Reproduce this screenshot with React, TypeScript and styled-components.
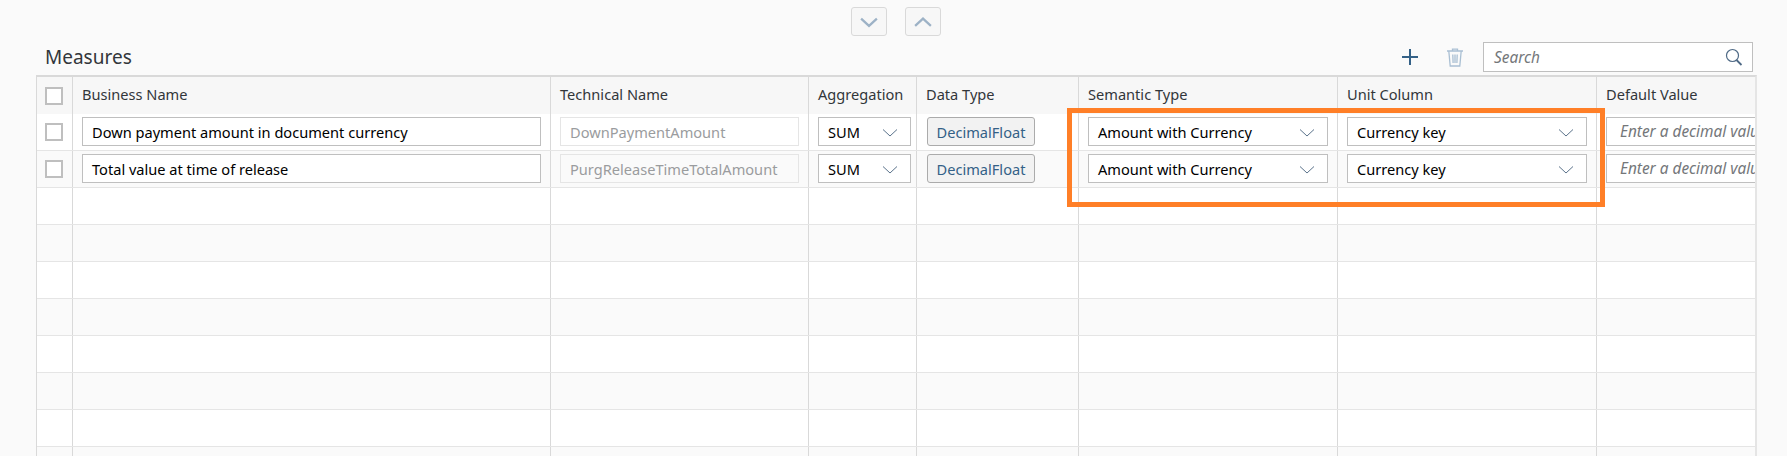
import { FC } from "react";
import styled, { createGlobalStyle } from "styled-components";

const GlobalStyle = createGlobalStyle`
  html, body {
    margin: 0;
    background: #fafafa;
    overflow: hidden;
  }
  * { box-sizing: border-box; }
`;

const FONT = `"Noto Sans", "Liberation Sans", sans-serif`;
const COLUMNS = "36px 478px 258px 108px 162px 259px 259px 160px";

const Page = styled.div`
  width: 1787px;
  height: 456px;
  overflow: hidden;
  padding: 7px 30px 0 36px;
  font-family: ${FONT};
  position: relative;
`;

const MoveBar = styled.div`
  display: flex;
  gap: 18px;
  height: 29px;
  padding-left: 815px;
`;

const MoveButton = styled.button`
  width: 36px;
  height: 29px;
  padding: 0;
  display: flex;
  align-items: center;
  justify-content: center;
  background: #f7f7f7;
  border: 1px solid #d9d9d9;
  border-radius: 3px;
`;

const Toolbar = styled.div`
  display: flex;
  align-items: center;
  height: 39px;
  padding: 3px 4px 0 9px;
`;

const Title = styled.h2`
  flex: 1;
  margin: 0;
  font-size: 19px;
  font-weight: 400;
  color: #32363a;
`;

const IconButton = styled.span<{ $gap: number }>`
  display: flex;
  width: 22px;
  height: 22px;
  align-items: center;
  justify-content: center;
  margin-right: ${({ $gap }) => $gap}px;
`;

const SearchBox = styled.div`
  width: 270px;
  height: 30px;
  display: flex;
  align-items: center;
  justify-content: space-between;
  padding: 0 9px 0 10px;
  background: #fff;
  border: 1px solid #bfbfbf;
  font-size: 15.4px;
  font-style: italic;
  color: #74777a;
`;

const Table = styled.div`
  width: 1721px;
  border-top: 2px solid #d9d9d9;
  border-left: 1px solid #d9d9d9;
  border-right: 2px solid #e5e5e5;
  overflow: hidden;
`;

const Row = styled.div<{ $kind: "head" | "odd" | "even" }>`
  display: grid;
  grid-template-columns: ${COLUMNS};
  height: 37px;
  background: ${({ $kind }) =>
    $kind === "head" ? "#f7f7f7" : $kind === "odd" ? "#fff" : "#fafafa"};
  border-bottom: ${({ $kind }) => ($kind === "head" ? "0" : "1px solid #e5e5e5")};
`;

const Cell = styled.div<{ $tight?: boolean }>`
  display: flex;
  align-items: center;
  min-width: 0;
  padding: 0 ${({ $tight }) => ($tight ? "5px" : "9px")} 0 9px;
  border-right: 1px solid #d9d9d9;
  &:last-child { border-right: 0; padding-right: 0; overflow: hidden; }
`;

const HeadLabel = styled.span`
  font-size: 14.6px;
  color: #32363a;
  white-space: nowrap;
  margin-bottom: 3px;
`;

const Check = styled.span`
  display: block;
  width: 18px;
  height: 18px;
  margin-left: -1px;
  background: #fff;
  border: 2px solid #bfbfbf;
`;

const Field = styled.div<{ $variant?: "readonly" | "select" | "placeholder" }>`
  flex: 1;
  min-width: ${({ $variant }) => ($variant === "placeholder" ? "170px" : "0")};
  height: 29px;
  margin-bottom: 1px;
  display: flex;
  align-items: center;
  justify-content: space-between;
  padding: 0 12px 0 ${({ $variant }) => ($variant === "placeholder" ? "13px" : "9px")};
  font-size: ${({ $variant }) => ($variant === "placeholder" ? "15.4px" : "14.6px")};
  white-space: nowrap;
  background: ${({ $variant }) => ($variant === "readonly" ? "transparent" : "#fff")};
  border: 1px solid ${({ $variant }) => ($variant === "readonly" ? "#e5e5e5" : "#bfbfbf")};
  color: ${({ $variant }) =>
    $variant === "readonly" ? "#9a9c9e" : $variant === "placeholder" ? "#74777a" : "#000"};
  font-style: ${({ $variant }) => ($variant === "placeholder" ? "italic" : "normal")};
`;

const TypeButton = styled.button`
  height: 29px;
  width: 108px;
  margin: 0 0 1px 1px;
  padding: 0;
  font-family: inherit;
  font-size: 14.6px;
  color: #346187;
  background: #f2f2f2;
  border: 1px solid #ababab;
  border-radius: 3px;
`;

const Highlight = styled.div`
  position: absolute;
  left: 1067px;
  top: 108px;
  width: 538px;
  height: 99px;
  border: 5px solid #ff7f27;
  pointer-events: none;
`;

const FieldChevron = styled.svg`
  flex: none;
  margin-top: 3px;
`;

const Chevron: FC<{ up?: boolean; color: string; size: number; width?: number }> = ({ up, color, size, width = 1 }) => (
  <svg width={size} height={size} viewBox="0 0 16 16" fill="none" stroke={color} strokeWidth={width}>
    <path d={up ? "M1 11.5 8 5 15 11.5" : "M1 5 8 11.5 15 5"} />
  </svg>
);

const Select: FC<{ label: string }> = ({ label }) => (
  <Field $variant="select">
    {label}
    <FieldChevron width="16" height="16" viewBox="0 0 16 16" fill="none" stroke="#5b738b" strokeWidth="1">
      <path d="M1 4.5 8 11 15 4.5" />
    </FieldChevron>
  </Field>
);

const RowCells: FC<{ name: string; technical: string }> = ({ name, technical }) => (
  <Row $kind={name.startsWith("Down") ? "odd" : "even"}>
    <Cell><Check /></Cell>
    <Cell><Field>{name}</Field></Cell>
    <Cell><Field $variant="readonly">{technical}</Field></Cell>
    <Cell $tight><Select label="SUM" /></Cell>
    <Cell><TypeButton>DecimalFloat</TypeButton></Cell>
    <Cell><Select label="Amount with Currency" /></Cell>
    <Cell><Select label="Currency key" /></Cell>
    <Cell><Field $variant="placeholder">Enter a decimal value</Field></Cell>
  </Row>
);

const HEADERS = ["Business Name", "Technical Name", "Aggregation", "Data Type", "Semantic Type", "Unit Column", "Default Value"];
const EMPTY_ROWS = ["odd", "even", "odd", "even", "odd", "even", "odd", "even"] as const;

export default function App() {
  return (
    <Page>
      <GlobalStyle />
      <MoveBar>
        <MoveButton><Chevron color="#9db2c6" size={18} width={2} /></MoveButton>
        <MoveButton><Chevron up color="#9db2c6" size={18} width={2} /></MoveButton>
      </MoveBar>
      <Toolbar>
        <Title>Measures</Title>
        <IconButton $gap={23}>
          <svg width="18" height="18" viewBox="0 0 18 18" stroke="#346187" strokeWidth="2"><path d="M9 1v16M1 9h16" /></svg>
        </IconButton>
        <IconButton $gap={17}>
          <svg width="18" height="20" viewBox="0 0 18 20" fill="none" stroke="#a9bfd3" strokeWidth="1.3">
            <path d="M1 4h16M6.5 4V2.2h5V4M2.8 4l1.4 15h9.6l1.4-15M6.8 7.5l.3 8.5M9 7.5V16M11.2 7.5l-.3 8.5" />
          </svg>
        </IconButton>
        <SearchBox>
          Search
          <svg width="18" height="18" viewBox="0 0 18 18" fill="none" stroke="#4f6a86" strokeWidth="1.2">
            <circle cx="7.5" cy="7.5" r="6" /><path d="M11.5 12l5 5" strokeWidth="1.8" />
          </svg>
        </SearchBox>
      </Toolbar>
      <Table>
        <Row $kind="head">
          <Cell><Check /></Cell>
          {HEADERS.map(h => <Cell key={h}><HeadLabel>{h}</HeadLabel></Cell>)}
        </Row>
        <RowCells name="Down payment amount in document currency" technical="DownPaymentAmount" />
        <RowCells name="Total value at time of release" technical="PurgReleaseTimeTotalAmount" />
        {EMPTY_ROWS.map((kind, i) => (
          <Row key={i} $kind={kind}>
            {Array.from({ length: 8 }, (_, c) => <Cell key={c} />)}
          </Row>
        ))}
      </Table>
      <Highlight />
    </Page>
  );
}
